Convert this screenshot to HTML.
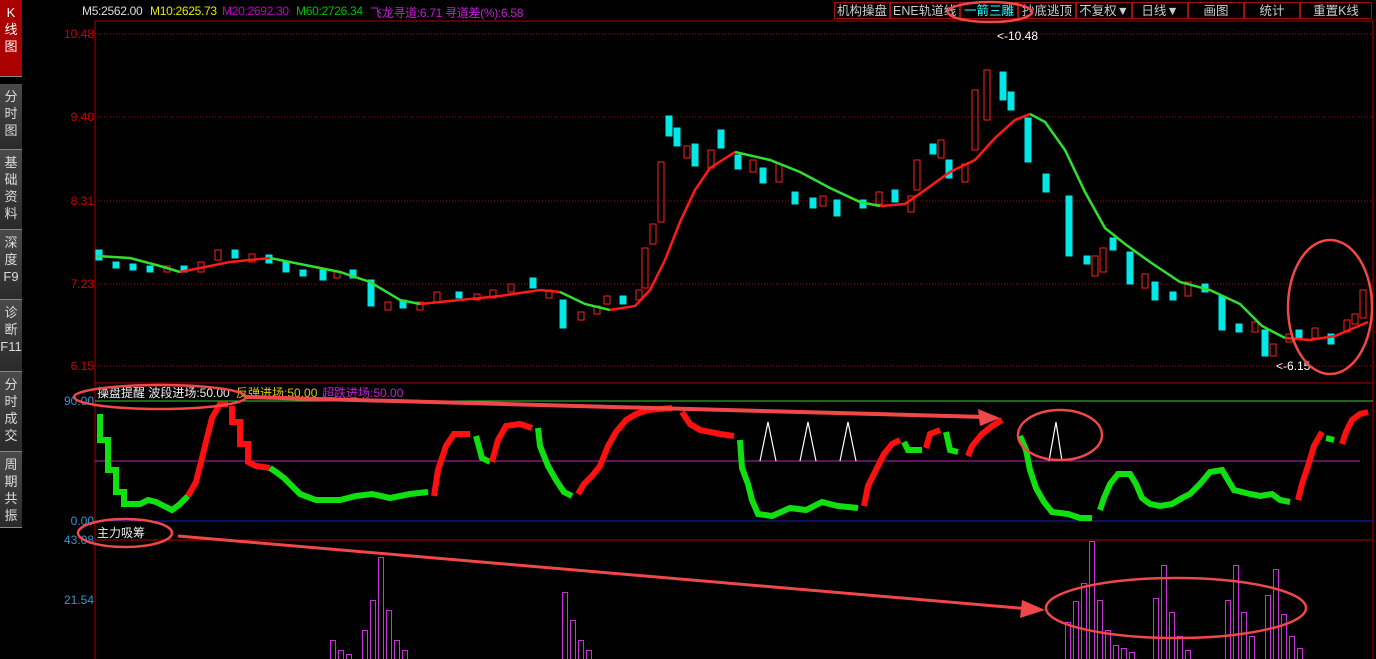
<!DOCTYPE html><html><head><meta charset="utf-8"><style>
body{margin:0;background:#000;width:1376px;height:659px;overflow:hidden;font-family:"Liberation Sans","Noto Sans CJK SC",sans-serif}
#sb{position:absolute;left:0;top:0;width:22px;height:659px;background:#000}
.tab{position:absolute;left:0;width:22px;background:linear-gradient(#4a4a4a,#2a2a2a);color:#ddd;font-size:13px;line-height:17px;text-align:center;border-bottom:1px solid #888;box-sizing:border-box;padding-top:4px}
.top{position:absolute;top:4px;font-size:12px;letter-spacing:-0.3px;white-space:nowrap}
.btn{position:absolute;top:2px;height:17px;border:1px solid #a01010;color:#ccc;font-size:12.5px;text-align:center;line-height:16px;box-sizing:border-box}
</style></head><body>
<div id="sb">
<div class="tab" style="top:0;height:77px;background:#a00;color:#fff">K<br>线<br>图</div>
<div class="tab" style="top:84px;height:66px">分<br>时<br>图</div>
<div class="tab" style="top:150px;height:80px">基<br>础<br>资<br>料</div>
<div class="tab" style="top:230px;height:70px">深<br>度<br>F9</div>
<div class="tab" style="top:300px;height:72px">诊<br>断<br>F11</div>
<div class="tab" style="top:372px;height:80px">分<br>时<br>成<br>交</div>
<div class="tab" style="top:452px;height:76px">周<br>期<br>共<br>振</div>
</div>
<div class="top" style="left:82px;color:#ddd">M5:2562.00</div>
<div class="top" style="left:150px;color:#e8e800">M10:2625.73</div>
<div class="top" style="left:222px;color:#c000c0">M20:2692.30</div>
<div class="top" style="left:296px;color:#00c000">M60:2726.34</div>
<div class="top" style="left:370px;color:#c020d0">飞龙寻道:6.71 寻道差(%):6.58</div>
<div class="btn" style="left:834px;width:56px">机构操盘</div>
<div class="btn" style="left:890px;width:70px;text-align:left;padding-left:2px">ENE轨道线</div>
<div class="btn" style="left:960px;width:58px;color:#2ff">一箭三雕</div>
<div class="btn" style="left:1018px;width:58px">抄底逃顶</div>
<div class="btn" style="left:1076px;width:56px">不复权▼</div>
<div class="btn" style="left:1132px;width:56px">日线▼</div>
<div class="btn" style="left:1188px;width:56px">画图</div>
<div class="btn" style="left:1244px;width:56px">统计</div>
<div class="btn" style="left:1300px;width:72px">重置K线</div>
<svg width="1376" height="659" style="position:absolute;left:0;top:0" font-family="Liberation Sans,Noto Sans CJK SC,sans-serif">
<g stroke="#b00000" fill="none">
<line x1="95" y1="21" x2="1373" y2="21"/><line x1="95" y1="21" x2="95" y2="659"/><line x1="1373" y1="21" x2="1373" y2="659"/>
<line x1="95" y1="383" x2="1373" y2="383"/><line x1="95" y1="540" x2="1373" y2="540"/>
<g stroke-dasharray="1,2" stroke="#a00000"><line x1="95" y1="34" x2="1373" y2="34"/><line x1="95" y1="117" x2="1373" y2="117"/><line x1="95" y1="201" x2="1373" y2="201"/><line x1="95" y1="284" x2="1373" y2="284"/><line x1="95" y1="366" x2="1373" y2="366"/></g>
</g>
<g fill="#d00000" font-size="12" text-anchor="end"><text x="94" y="38">10.48</text><text x="94" y="121">9.40</text><text x="94" y="205">8.31</text><text x="94" y="288">7.23</text><text x="94" y="370">6.15</text></g>
<g fill="#2a9ad8" font-size="12" text-anchor="end"><text x="94" y="405">90.00</text><text x="94" y="525">0.00</text><text x="94" y="544">43.08</text><text x="94" y="604">21.54</text></g>
<text x="997" y="40" fill="#fff" font-size="12">&lt;-10.48</text><text x="1276" y="370" fill="#fff" font-size="12">&lt;-6.15</text>
<g stroke-width="1">
<g fill="#00e8e8" stroke="#00e8e8">
<rect x="96" y="250" width="6" height="10"/><rect x="113" y="262" width="6" height="6"/><rect x="130" y="264" width="6" height="6"/><rect x="147" y="266" width="6" height="6"/><rect x="181" y="266" width="6" height="6"/><rect x="232" y="250" width="6" height="8"/><rect x="266" y="255" width="6" height="8"/><rect x="283" y="262" width="6" height="10"/><rect x="300" y="270" width="6" height="6"/><rect x="320" y="270" width="6" height="10"/><rect x="350" y="270" width="6" height="8"/><rect x="368" y="280" width="6" height="26"/><rect x="400" y="300" width="6" height="8"/><rect x="456" y="292" width="6" height="6"/><rect x="530" y="278" width="6" height="10"/><rect x="560" y="300" width="6" height="28"/><rect x="620" y="296" width="6" height="8"/><rect x="666" y="116" width="6" height="20"/><rect x="674" y="128" width="6" height="18"/><rect x="692" y="144" width="6" height="22"/><rect x="718" y="130" width="6" height="18"/><rect x="735" y="155" width="6" height="14"/><rect x="760" y="168" width="6" height="15"/><rect x="792" y="192" width="6" height="12"/><rect x="810" y="198" width="6" height="10"/><rect x="834" y="200" width="6" height="16"/><rect x="860" y="200" width="6" height="8"/><rect x="892" y="190" width="6" height="12"/><rect x="930" y="144" width="6" height="10"/><rect x="946" y="160" width="6" height="18"/><rect x="1000" y="72" width="6" height="28"/><rect x="1008" y="92" width="6" height="18"/><rect x="1025" y="118" width="6" height="44"/><rect x="1043" y="174" width="6" height="18"/><rect x="1066" y="196" width="6" height="60"/><rect x="1084" y="256" width="6" height="8"/><rect x="1110" y="238" width="6" height="12"/><rect x="1127" y="252" width="6" height="32"/><rect x="1152" y="282" width="6" height="18"/><rect x="1170" y="292" width="6" height="8"/><rect x="1202" y="284" width="6" height="8"/><rect x="1219" y="296" width="6" height="34"/><rect x="1236" y="324" width="6" height="8"/><rect x="1262" y="330" width="6" height="26"/><rect x="1296" y="330" width="6" height="8"/><rect x="1328" y="334" width="6" height="10"/></g>
<g fill="none" stroke="#ff2020">
<rect x="164" y="266" width="6" height="6"/><rect x="198" y="262" width="6" height="10"/><rect x="215" y="250" width="6" height="10"/><rect x="249" y="254" width="6" height="8"/><rect x="334" y="272" width="6" height="6"/><rect x="385" y="302" width="6" height="8"/><rect x="417" y="302" width="6" height="8"/><rect x="434" y="292" width="6" height="10"/><rect x="474" y="294" width="6" height="6"/><rect x="490" y="290" width="6" height="8"/><rect x="508" y="284" width="6" height="8"/><rect x="546" y="290" width="6" height="8"/><rect x="578" y="312" width="6" height="8"/><rect x="594" y="306" width="6" height="8"/><rect x="604" y="296" width="6" height="8"/><rect x="636" y="290" width="6" height="10"/><rect x="642" y="248" width="6" height="40"/><rect x="650" y="224" width="6" height="20"/><rect x="658" y="162" width="6" height="60"/><rect x="684" y="146" width="6" height="12"/><rect x="708" y="150" width="6" height="18"/><rect x="750" y="160" width="6" height="12"/><rect x="776" y="164" width="6" height="18"/><rect x="820" y="196" width="6" height="10"/><rect x="876" y="192" width="6" height="12"/><rect x="908" y="196" width="6" height="16"/><rect x="914" y="160" width="6" height="30"/><rect x="938" y="140" width="6" height="18"/><rect x="962" y="164" width="6" height="18"/><rect x="972" y="90" width="6" height="60"/><rect x="984" y="70" width="6" height="50"/><rect x="1092" y="256" width="6" height="20"/><rect x="1100" y="248" width="6" height="24"/><rect x="1142" y="274" width="6" height="14"/><rect x="1185" y="282" width="6" height="14"/><rect x="1252" y="322" width="6" height="10"/><rect x="1270" y="344" width="6" height="12"/><rect x="1286" y="334" width="6" height="8"/><rect x="1312" y="328" width="6" height="10"/><rect x="1344" y="320" width="6" height="12"/><rect x="1352" y="314" width="6" height="10"/><rect x="1360" y="290" width="6" height="28"/></g>
</g>
<polyline fill="none" stroke="#ff1a1a" stroke-width="2.5" points="180,272 200,268 230,262 270,258"/>
<polyline fill="none" stroke="#30e030" stroke-width="2.5" points="97,256 130,258 160,266 180,272"/>
<polyline fill="none" stroke="#30e030" stroke-width="2.5" points="270,258 300,264 340,272 370,282 400,300 420,304"/>
<polyline fill="none" stroke="#ff1a1a" stroke-width="2.5" points="420,304 460,300 500,296 540,290 560,292"/>
<polyline fill="none" stroke="#30e030" stroke-width="2.5" points="560,292 585,304 610,310"/>
<polyline fill="none" stroke="#ff1a1a" stroke-width="2.5" points="610,310 635,306 650,290 665,260 680,222 695,190 710,168 735,152"/>
<polyline fill="none" stroke="#30e030" stroke-width="2.5" points="735,152 770,160 800,172 830,188 860,202 880,206"/>
<polyline fill="none" stroke="#ff1a1a" stroke-width="2.5" points="880,206 905,204 925,190 950,172 975,160 995,138 1015,120 1030,114"/>
<polyline fill="none" stroke="#30e030" stroke-width="2.5" points="1030,114 1045,122 1065,150 1085,192 1105,228 1125,244 1150,262 1180,282 1210,290 1240,304 1262,326 1285,338"/>
<polyline fill="none" stroke="#ff1a1a" stroke-width="2.5" points="1285,338 1310,340 1335,336 1368,322"/>
<line x1="95" y1="401" x2="1373" y2="401" stroke="#30d030"/>
<line x1="95" y1="461" x2="1360" y2="461" stroke="#c020c0"/>
<line x1="95" y1="521" x2="1373" y2="521" stroke="#2020c0"/>
<text x="97" y="397" fill="#eee" font-size="12">操盘提醒 波段进场:50.00</text>
<text x="236" y="397" fill="#d8c800" font-size="12">反弹进场:50.00</text>
<text x="322" y="397" fill="#c020d0" font-size="12">超跌进场:50.00</text>
<text x="97" y="537" fill="#eee" font-size="12">主力吸筹</text>
<g fill="none" stroke-width="6">
<polyline stroke="#10e010" points="100,414 100,440 108,440 108,470 116,470 116,492 124,492 124,504 132,504 140,504 148,500 156,502 164,506 172,510 180,504 188,496"/>
<polyline stroke="#ff1010" points="188,496 196,482 204,450 212,418 220,404 228,404"/>
<polyline stroke="#ff1010" points="232,406 232,422 240,422 240,444 248,444 248,462 256,466 270,468"/>
<polyline stroke="#10e010" points="270,468 276,472 284,478 292,486 300,494 316,500 340,500 356,496 372,494 390,498 410,494 428,492"/>
<polyline stroke="#ff1010" points="434,496 438,470 446,446 454,434 470,434"/>
<polyline stroke="#10e010" points="476,436 482,458 490,462"/>
<polyline stroke="#ff1010" points="492,462 498,440 506,426 520,424 532,428"/>
<polyline stroke="#10e010" points="538,428 540,446 548,466 556,480 564,492 572,496"/>
<polyline stroke="#ff1010" points="578,494 584,484 592,476 600,466 608,446 616,432 626,420 636,414 648,410 672,408"/>
<polyline stroke="#ff1010" points="682,412 690,424 700,430 720,434 734,436"/>
<polyline stroke="#10e010" points="740,440 742,468 748,484 752,500 758,514 772,516 790,508 806,510 822,502 838,506 858,508"/>
<polyline stroke="#ff1010" points="864,506 868,486 876,470 884,454 892,444 900,440"/>
<polyline stroke="#10e010" points="904,442 908,450 922,450"/>
<polyline stroke="#ff1010" points="926,448 930,434 940,430"/>
<polyline stroke="#10e010" points="946,432 950,450 958,452"/>
<polyline stroke="#ff1010" points="968,456 972,446 982,434 992,426 1002,420"/>
<polyline stroke="#10e010" points="1020,436 1026,450 1030,470 1036,488 1044,502 1052,512 1068,514 1080,518 1092,518"/>
<polyline stroke="#10e010" points="1100,510 1104,498 1110,484 1118,474 1130,474 1136,484 1142,498 1150,504 1160,506 1172,504 1182,498 1190,494 1200,484 1210,472 1222,470 1228,480 1234,490 1250,494 1260,496 1272,494 1280,500 1290,502"/>
<polyline stroke="#ff1010" points="1298,500 1302,484 1308,466 1314,446 1322,432"/>
<polyline stroke="#10e010" points="1326,438 1334,440"/>
<polyline stroke="#ff1010" points="1342,444 1346,432 1352,420 1360,414 1368,412"/>
</g>
<g stroke="#fff" fill="none" stroke-width="1.2"><polyline points="760,461 768,422 776,461"/><polyline points="800,461 808,422 816,461"/><polyline points="840,461 848,422 856,461"/><polyline points="1049,461 1056,422 1062,461"/></g>
<g fill="none" stroke="#c830d8">
<rect x="330.5" y="640.5" width="5" height="30"/><rect x="338.5" y="650.5" width="5" height="20"/><rect x="346.5" y="654.5" width="5" height="20"/><rect x="362.5" y="630.5" width="5" height="40"/><rect x="370.5" y="600.5" width="5" height="70"/><rect x="378.5" y="557.5" width="5" height="110"/><rect x="386.5" y="610.5" width="5" height="60"/><rect x="394.5" y="640.5" width="5" height="30"/><rect x="402.5" y="650.5" width="5" height="20"/>
<rect x="562.5" y="592.5" width="5" height="70"/><rect x="570.5" y="620.5" width="5" height="50"/><rect x="578.5" y="640.5" width="5" height="30"/><rect x="586.5" y="650.5" width="5" height="20"/>
<rect x="1065.5" y="622.5" width="5" height="40"/><rect x="1073.5" y="601.5" width="5" height="60"/><rect x="1081.5" y="583.5" width="5" height="80"/><rect x="1089.5" y="541.5" width="5" height="120"/><rect x="1097.5" y="600.5" width="5" height="60"/><rect x="1105.5" y="630.5" width="5" height="30"/><rect x="1113.5" y="645.5" width="5" height="20"/><rect x="1121.5" y="648.5" width="5" height="20"/><rect x="1129.5" y="652.5" width="5" height="10"/>
<rect x="1153.5" y="598.5" width="5" height="70"/><rect x="1161.5" y="565.5" width="5" height="100"/><rect x="1169.5" y="612.5" width="5" height="50"/><rect x="1177.5" y="636.5" width="5" height="30"/><rect x="1185.5" y="650.5" width="5" height="20"/>
<rect x="1225.5" y="600.5" width="5" height="70"/><rect x="1233.5" y="565.5" width="5" height="100"/><rect x="1241.5" y="612.5" width="5" height="50"/><rect x="1249.5" y="636.5" width="5" height="30"/>
<rect x="1265.5" y="595.5" width="5" height="70"/><rect x="1273.5" y="569.5" width="5" height="100"/><rect x="1281.5" y="614.5" width="5" height="50"/><rect x="1289.5" y="636.5" width="5" height="30"/><rect x="1297.5" y="648.5" width="5" height="20"/>
</g>
<g fill="none" stroke="#f04848" stroke-width="2.5">
<ellipse cx="990" cy="12" rx="42" ry="10"/><ellipse cx="1330" cy="307" rx="42" ry="67"/>
<ellipse cx="160" cy="397" rx="86" ry="12"/><ellipse cx="1060" cy="435" rx="42" ry="25"/>
<ellipse cx="125" cy="533" rx="47" ry="14"/><ellipse cx="1176" cy="608" rx="130" ry="30"/>
<line x1="245" y1="397" x2="985" y2="417" stroke-width="4"/>
<line x1="178" y1="536" x2="1030" y2="609" stroke-width="3"/>
</g>
<polygon points="1000,418 978,409 980,426" fill="#f04848"/>
<polygon points="1045,610 1022,600 1020,618" fill="#f04848"/>
</svg>
</body></html>
